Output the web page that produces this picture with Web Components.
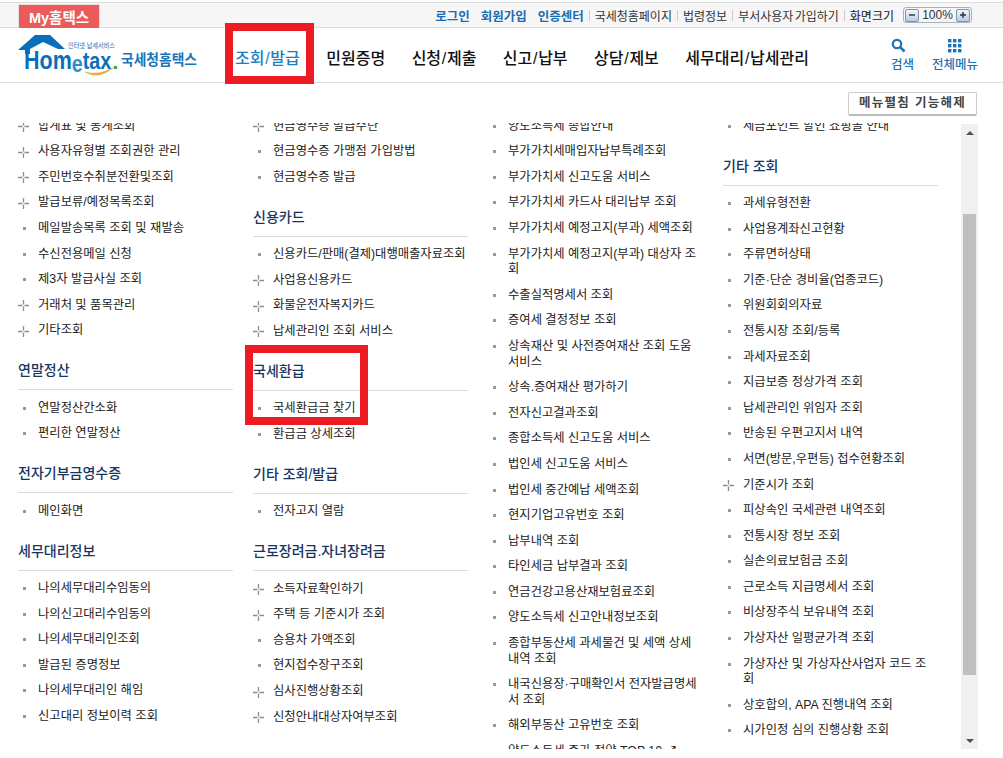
<!DOCTYPE html>
<html lang="ko">
<head>
<meta charset="utf-8">
<title>Hometax</title>
<style>
  html, body { margin: 0; padding: 0; background: #fff; overflow: hidden; }
  body { font-family: "Liberation Sans", "Noto Sans CJK KR", sans-serif; color: #222; width: 1003px; height: 758px; position: relative; }
</style>
</head>
<body>
<ht-topbar></ht-topbar>
<ht-nav></ht-nav>
<ht-toolbar></ht-toolbar>
<ht-scroller>
  <ht-column>
    <ht-item plus>합계표 및 통계조회</ht-item>
    <ht-item plus>사용자유형별 조회권한 관리</ht-item>
    <ht-item plus>주민번호수취분전환및조회</ht-item>
    <ht-item plus>발급보류/예정목록조회</ht-item>
    <ht-item>메일발송목록 조회 및 재발송</ht-item>
    <ht-item>수신전용메일 신청</ht-item>
    <ht-item>제3자 발급사실 조회</ht-item>
    <ht-item plus>거래처 및 품목관리</ht-item>
    <ht-item plus>기타조회</ht-item>
    <ht-group label="연말정산">
      <ht-item>연말정산간소화</ht-item>
      <ht-item>편리한 연말정산</ht-item>
    </ht-group>
    <ht-group label="전자기부금영수증">
      <ht-item>메인화면</ht-item>
    </ht-group>
    <ht-group label="세무대리정보">
      <ht-item>나의세무대리수임동의</ht-item>
      <ht-item>나의신고대리수임동의</ht-item>
      <ht-item>나의세무대리인조회</ht-item>
      <ht-item>발급된 증명정보</ht-item>
      <ht-item>나의세무대리인 해임</ht-item>
      <ht-item>신고대리 정보이력 조회</ht-item>
    </ht-group>
  </ht-column>
  <ht-column>
    <ht-item plus>현금영수증 발급수단</ht-item>
    <ht-item>현금영수증 가맹점 가입방법</ht-item>
    <ht-item>현금영수증 발급</ht-item>
    <ht-group label="신용카드">
      <ht-item>신용카드/판매(결제)대행매출자료조회</ht-item>
      <ht-item plus>사업용신용카드</ht-item>
      <ht-item plus>화물운전자복지카드</ht-item>
      <ht-item plus>납세관리인 조회 서비스</ht-item>
    </ht-group>
    <ht-group label="국세환급">
      <ht-item>국세환급금 찾기</ht-item>
      <ht-item>환급금 상세조회</ht-item>
    </ht-group>
    <ht-group label="기타 조회/발급">
      <ht-item>전자고지 열람</ht-item>
    </ht-group>
    <ht-group label="근로장려금.자녀장려금">
      <ht-item plus>소득자료확인하기</ht-item>
      <ht-item plus>주택 등 기준시가 조회</ht-item>
      <ht-item>승용차 가액조회</ht-item>
      <ht-item>현지접수장구조회</ht-item>
      <ht-item plus>심사진행상황조회</ht-item>
      <ht-item plus>신청안내대상자여부조회</ht-item>
    </ht-group>
  </ht-column>
  <ht-column>
    <ht-item>양도소득세 종합안내</ht-item>
    <ht-item>부가가치세매입자납부특례조회</ht-item>
    <ht-item>부가가치세 신고도움 서비스</ht-item>
    <ht-item>부가가치세 카드사 대리납부 조회</ht-item>
    <ht-item>부가가치세 예정고지(부과) 세액조회</ht-item>
    <ht-item>부가가치세 예정고지(부과) 대상자 조회</ht-item>
    <ht-item>수출실적명세서 조회</ht-item>
    <ht-item>증여세 결정정보 조회</ht-item>
    <ht-item>상속재산 및 사전증여재산 조회 도움 서비스</ht-item>
    <ht-item>상속.증여재산 평가하기</ht-item>
    <ht-item>전자신고결과조회</ht-item>
    <ht-item>종합소득세 신고도움 서비스</ht-item>
    <ht-item>법인세 신고도움 서비스</ht-item>
    <ht-item>법인세 중간예납 세액조회</ht-item>
    <ht-item>현지기업고유번호 조회</ht-item>
    <ht-item>납부내역 조회</ht-item>
    <ht-item>타인세금 납부결과 조회</ht-item>
    <ht-item>연금건강고용산재보험료조회</ht-item>
    <ht-item>양도소득세 신고안내정보조회</ht-item>
    <ht-item>종합부동산세 과세물건 및 세액 상세 내역 조회</ht-item>
    <ht-item>내국신용장·구매확인서 전자발급명세서 조회</ht-item>
    <ht-item>해외부동산 고유번호 조회</ht-item>
    <ht-item>양도소득세 증가 절약 TOP 10 ↗</ht-item>
  </ht-column>
  <ht-column>
    <ht-item>세금포인트 할인 쇼핑몰 안내</ht-item>
    <ht-group label="기타 조회">
      <ht-item>과세유형전환</ht-item>
      <ht-item>사업용계좌신고현황</ht-item>
      <ht-item>주류면허상태</ht-item>
      <ht-item>기준·단순 경비율(업종코드)</ht-item>
      <ht-item>위원회회의자료</ht-item>
      <ht-item>전통시장 조회/등록</ht-item>
      <ht-item>과세자료조회</ht-item>
      <ht-item>지급보증 정상가격 조회</ht-item>
      <ht-item>납세관리인 위임자 조회</ht-item>
      <ht-item>반송된 우편고지서 내역</ht-item>
      <ht-item>서면(방문,우편등) 접수현황조회</ht-item>
      <ht-item plus>기준시가 조회</ht-item>
      <ht-item>피상속인 국세관련 내역조회</ht-item>
      <ht-item>전통시장 정보 조회</ht-item>
      <ht-item>실손의료보험금 조회</ht-item>
      <ht-item>근로소득 지급명세서 조회</ht-item>
      <ht-item>비상장주식 보유내역 조회</ht-item>
      <ht-item>가상자산 일평균가격 조회</ht-item>
      <ht-item>가상자산 및 가상자산사업자 코드 조회</ht-item>
      <ht-item>상호합의, APA 진행내역 조회</ht-item>
      <ht-item>시가인정 심의 진행상황 조회</ht-item>
    </ht-group>
  </ht-column>
</ht-scroller>
<ht-highlight style="left:245px;top:345px;width:123px;height:80px"></ht-highlight>

<script>
class HtTopbar extends HTMLElement {
  connectedCallback() {
    this.attachShadow({ mode: 'open' });
    this.shadowRoot.innerHTML = `
      <style>
        :host { display: flex; box-sizing: border-box; height: 26px; margin-top: 2px; align-items: stretch; justify-content: space-between;
          background: #f6f6f6; border-top: 1px solid #dcdcdc; border-bottom: 1px solid #dcdcdc; padding: 0 31px 0 18px; font-size: 12px; }
        .my { box-sizing: border-box; width: 82px; margin-top: 1px; margin-bottom: -1px; background: #ec5a5a; border: 1px solid #e4e0e0; border-bottom: 0; color: #fff;
          font-weight: 700; font-size: 14.5px; display: flex; align-items: center; justify-content: center; }
        .links { display: flex; align-items: center; }
        .links span { white-space: nowrap; color: #333; }
        .links .b { color: #1b6cb0; font-weight: 700; font-size: 12.5px; margin-right: 11px; }
        .links .s { display: flex; align-items: center; margin-right: 11px; }
        .links .d { display: flex; align-items: center; color: #111; margin-right: 9px; }
        .links .s::before, .links .d::before { content: ""; width: 1px; height: 11px; background: #ccc; margin-left: -6px; margin-right: 5px; }
        .links .w { word-spacing: -2px; }
        .zoom { box-sizing: border-box; width: 69px; height: 16px; border: 1px solid #a6b3c6; border-radius: 3px; display: flex; align-items: center; justify-content: space-between; padding: 0 1px; font-size: 12px; color: #555; }
        .zoom b { box-sizing: border-box; width: 14px; height: 13px; border: 1px solid #7f93ad; border-radius: 2px; background: linear-gradient(#f2f6fb, #b9cbe0); display: flex; align-items: center; justify-content: center; }
        svg { display: block; }
      </style>
      <div class="my">My홈택스</div>
      <div class="links">
        <span class="b">로그인</span><span class="b">회원가입</span><span class="b">인증센터</span>
        <span class="s">국세청홈페이지</span><span class="s">법령정보</span><span class="s w">부서사용자 가입하기</span>
        <span class="d">화면크기</span>
        <div class="zoom">
          <b><svg width="8" height="8"><path d="M1 4h6" stroke="#234" stroke-width="1.4"/></svg></b>
          <span>100%</span>
          <b><svg width="8" height="8"><path d="M1 4h6M4 1v6" stroke="#234" stroke-width="1.4"/></svg></b>
        </div>
      </div>`;
  }
}

class HtLogo extends HTMLElement {
  connectedCallback() {
    this.attachShadow({ mode: 'open' });
    this.shadowRoot.innerHTML = `
      <style>
        :host { display: block; width: 190px; height: 48px; }
        svg { display: block; }
        text { font-family: "Liberation Sans", "Noto Sans CJK KR", sans-serif; }
      </style>
      <svg width="190" height="48" viewBox="18 31 190 48">
        <path d="M18 50 35 35H50L65 49H58L43 42 30 49V54H25V50Z" fill="#0a6fba"/>
        <text transform="translate(24 69) scale(.86 1)" font-size="25" font-weight="700" fill="#0a6fba">Hom<tspan dy="3" font-size="23" fill="#2c8fc9">e</tspan><tspan dy="-3" font-size="23">tax</tspan></text>
        <circle cx="115.5" cy="67.5" r="1.8" fill="#2aa84a"/>
        <path d="M85 72Q98 80 113 68Q98 76 85 72Z" fill="#f2a33a" stroke="#f2a33a" stroke-width=".6"/>
        <text x="68" y="48" font-size="6.5" fill="#1b6cb0" textLength="47" lengthAdjust="spacingAndGlyphs">인터넷 납세서비스</text>
        <text x="121" y="65" font-size="14.5" font-weight="700" fill="#1b74b8" textLength="76" lengthAdjust="spacingAndGlyphs">국세청홈택스</text>
      </svg>`;
  }
}

class HtNav extends HTMLElement {
  connectedCallback() {
    this.attachShadow({ mode: 'open' });
    this.shadowRoot.innerHTML = `
      <style>
        :host { display: flex; box-sizing: border-box; height: 55px; align-items: center; position: relative; border-bottom: 1px solid #dedede; padding-left: 18px; }
        nav { display: flex; gap: 26.5px; margin-left: 27px; font-size: 16px; font-weight: 500; color: #111; white-space: nowrap; padding-top: 3px; }
        nav .on { color: #1a7fc6; }
        nav i { font-style: normal; margin: 0 .7px; }
        .tools { margin-left: auto; display: flex; gap: 18px; margin-right: 25px; color: #1b74b8; font-size: 12.5px; font-weight: 500; }
        .tool { display: flex; flex-direction: column; align-items: center; gap: 1px; }
        .tool.l { align-items: flex-start; }
        svg { display: block; }
        .box { position: absolute; left: 225px; top: -5px; width: 89px; height: 61px; box-sizing: border-box; border: 8px solid #ed1c24; }
      </style>
      <ht-logo></ht-logo>
      <nav><span class="on">조회<i>/</i>발급</span><span>민원증명</span><span>신청<i>/</i>제출</span><span>신고<i>/</i>납부</span><span>상담<i>/</i>제보</span><span>세무대리<i>/</i>납세관리</span></nav>
      <div class="tools">
        <div class="tool l">
          <svg width="16" height="15" viewBox="0 0 16 15"><circle cx="6" cy="6" r="4.2" fill="none" stroke="#1b74b8" stroke-width="2.2"/><path d="M9.2 9.2 13.5 13.5" stroke="#1b74b8" stroke-width="2.6"/></svg>
          <span>검색</span>
        </div>
        <div class="tool">
          <svg width="14" height="15" viewBox="0 0 14 15" fill="#1b74b8">
            <rect x="0" y="1" width="3.4" height="3.4"/><rect x="5" y="1" width="3.4" height="3.4"/><rect x="10" y="1" width="3.4" height="3.4"/>
            <rect x="0" y="6" width="3.4" height="3.4"/><rect x="5" y="6" width="3.4" height="3.4"/><rect x="10" y="6" width="3.4" height="3.4"/>
            <rect x="0" y="11" width="3.4" height="3.4"/><rect x="5" y="11" width="3.4" height="3.4"/><rect x="10" y="11" width="3.4" height="3.4"/>
          </svg>
          <span>전체메뉴</span>
        </div>
      </div>
      <div class="box"></div>`;
  }
}

class HtToolbar extends HTMLElement {
  connectedCallback() {
    this.attachShadow({ mode: 'open' });
    this.shadowRoot.innerHTML = `
      <style>
        :host { display: flex; justify-content: flex-end; height: 40px; box-sizing: border-box; padding: 9px 26px 0 0; }
        button { all: unset; box-sizing: border-box; width: 129px; height: 24px; border: 1px solid #ccc; border-bottom: 2px solid #bbb; border-radius: 2px; background: #fff;
          font-size: 12.5px; font-weight: 700; color: #444; text-align: center; line-height: 21px; letter-spacing: 1.3px; font-family: inherit; white-space: nowrap; }
      </style>
      <button>메뉴펼침 기능해제</button>`;
  }
}

class HtScroller extends HTMLElement {
  connectedCallback() {
    this.attachShadow({ mode: 'open' });
    this.shadowRoot.innerHTML = `
      <style>
        :host { display: flex; height: 626px; padding-right: 25px; }
        .view { flex: 1; min-width: 0; overflow: hidden; }
        .cols { display: grid; grid-template-columns: repeat(4, 215px); column-gap: 20px; padding-left: 18px; margin-top: -9.4px; }
        .bar { width: 17px; margin-top: 1px; background: #f0f0f0; display: flex; flex-direction: column; align-items: center; }
        .arrow { height: 17px; display: flex; align-items: center; justify-content: center; flex: none; }
        .track { flex: 1; width: 100%; padding-top: 73px; padding-bottom: 57px; box-sizing: border-box; display: flex; justify-content: center; }
        .thumb { width: 13px; height: 100%; background: #bfbfbf; }
        svg { display: block; }
      </style>
      <div class="view"><div class="cols"><slot></slot></div></div>
      <div class="bar">
        <div class="arrow"><svg width="8" height="4"><path d="M0 4 4 0 8 4Z" fill="#505050"/></svg></div>
        <div class="track"><div class="thumb"></div></div>
        <div class="arrow"><svg width="8" height="4"><path d="M0 0 4 4 8 0Z" fill="#505050"/></svg></div>
      </div>`;
  }
}

class HtColumn extends HTMLElement {
  connectedCallback() {
    this.attachShadow({ mode: 'open' });
    this.shadowRoot.innerHTML = `
      <style>:host { display: block; min-width: 0; }</style>
      <slot></slot>`;
  }
}

class HtGroup extends HTMLElement {
  connectedCallback() {
    this.attachShadow({ mode: 'open' });
    this.shadowRoot.innerHTML = `
      <style>
        :host { display: block; }
        h3 { margin: 0; padding: 18.4px 0 11px; line-height: 16px; font-size: 14px; font-weight: 500; color: #17365f; border-bottom: 1px solid #dcdcdc; }
        .list { padding-top: 5.4px; }
      </style>
      <h3>${this.getAttribute('label')}</h3>
      <div class="list"><slot></slot></div>`;
  }
}

class HtItem extends HTMLElement {
  connectedCallback() {
    this.attachShadow({ mode: 'open' });
    const mark = this.hasAttribute('plus')
      ? '<svg class="m" width="11" height="11" viewBox="0 0 11 11"><path d="M5.5 0v4.5M5.5 6.5v4.5M0 5.5h4.5M6.5 5.5h4.5" stroke="#8c8c8c" stroke-width="1.3"/></svg>'
      : '<i class="m"></i>';
    this.shadowRoot.innerHTML = `
      <style>
        :host { display: flex; padding: 5px 0; line-height: 15.6px; font-size: 12.3px; color: #222; position: relative; }
        .m { flex: none; position: absolute; }
        svg.m { left: 0; top: 7.5px; }
        i.m { left: 5px; top: 11px; width: 3px; height: 3px; background: #999; }
        .t { margin-left: 20px; width: 193px; word-break: break-all; }
      </style>
      ${mark}<div class="t"><slot></slot></div>`;
  }
}

class HtHighlight extends HTMLElement {
  connectedCallback() {
    this.attachShadow({ mode: 'open' });
    this.shadowRoot.innerHTML = `
      <style>:host { display: block; position: absolute; box-sizing: border-box; border: 8px solid #ed1c24; }</style>`;
  }
}

customElements.define('ht-topbar', HtTopbar);
customElements.define('ht-logo', HtLogo);
customElements.define('ht-nav', HtNav);
customElements.define('ht-toolbar', HtToolbar);
customElements.define('ht-scroller', HtScroller);
customElements.define('ht-column', HtColumn);
customElements.define('ht-group', HtGroup);
customElements.define('ht-item', HtItem);
customElements.define('ht-highlight', HtHighlight);
</script>
</body>
</html>
